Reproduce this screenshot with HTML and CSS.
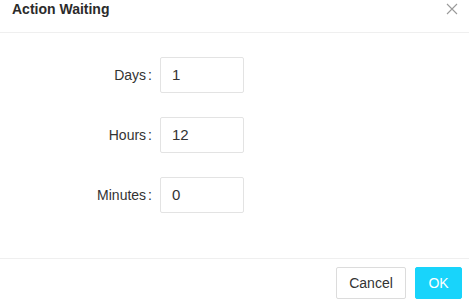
FILE: index.html
```html
<!DOCTYPE html>
<html>
<head>
<meta charset="utf-8">
<link rel="stylesheet" href="styles.css">
</head>
<body>
<div class="dialog">
  <div class="header">
    <span class="title">Action Waiting</span>
    <svg class="close" width="12" height="12" viewBox="0 0 12 12"><path d="M1 1L11 11M11 1L1 11" stroke="#9a9a9a" stroke-width="1.1" fill="none"/></svg>
  </div>
  <div class="body">
    <div class="row"><label class="label">Days</label><div class="input">1</div></div>
    <div class="row"><label class="label">Hours</label><div class="input">12</div></div>
    <div class="row"><label class="label">Minutes</label><div class="input">0</div></div>
  </div>
  <div class="footer">
    <button class="btn">Cancel</button>
    <button class="btn primary">OK</button>
  </div>
</div>
</body>
</html>
```
FILE: styles.css
```css
html, body { margin: 0; padding: 0; background: #fff; }
body { font-family: "Liberation Sans", Arial, sans-serif; color: #333; }
.dialog { width: 469px; height: 301px; display: flex; flex-direction: column; }
.header { border-bottom: 1px solid #efefef; display: flex; justify-content: space-between; align-items: flex-start; padding: 0 11px 0 12px; box-sizing: border-box; height: 33px; }
.title { font-size: 14px; font-weight: bold; line-height: 18px; color: #2b2b2b; }
.close { margin-top: 3px; }
.body { flex: 1; padding-top: 24px; display: flex; flex-direction: column; gap: 24px; }
.row { display: flex; align-items: center; height: 36px; }
.label { flex: 0 0 160px; text-align: right; font-size: 14px; color: #333; }
.label::after { content: ":"; margin: 0 8px 0 2px; }
.input { width: 84px; height: 36px; box-sizing: border-box; border: 1px solid #e3e3e3; border-radius: 2px; padding: 0 11px; font-size: 15px; line-height: 34px; color: #333; }
.footer { border-top: 1px solid #efefef; height: 43px; display: flex; justify-content: flex-end; align-items: flex-start; padding: 8px 7px 0 0; gap: 9px; box-sizing: border-box; }
.btn { height: 32px; font-family: "Liberation Sans", Arial, sans-serif; font-size: 14px; border-radius: 2px; border: 1px solid #dcdcdc; background: #fff; color: #333; padding: 0; width: 70px; }
.btn.primary { width: 47px; background: #18d4fb; border-color: #18d4fb; color: #fff; }
```
